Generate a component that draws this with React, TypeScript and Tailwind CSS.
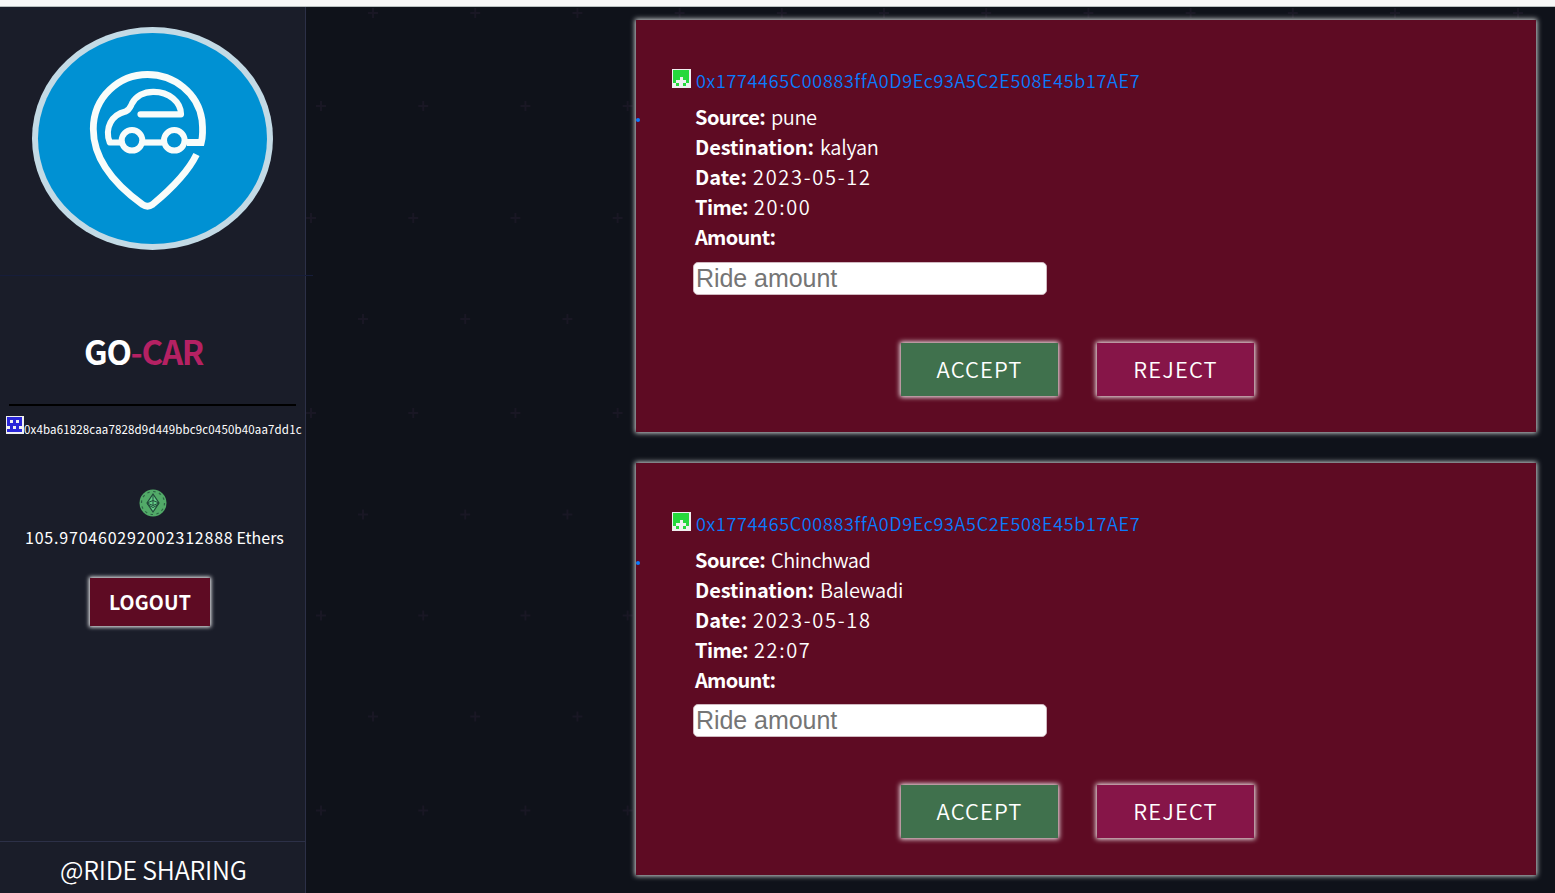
import React from "react";

const ADDRESS = "0x1774465C00883ffA0D9Ec93A5C2E508E45b17AE7";

const rides = [
  { source: "pune", destination: "kalyan", date: "2023-05-12", time: "20:00", inputGap: "mt-[10px]" },
  { source: "Chinchwad", destination: "Balewadi", date: "2023-05-18", time: "22:07", inputGap: "mt-[9px]" },
];

const plusRows: [number, number, number][] = [
  [13, 373, 11],
  [13, 1518, 1],
  [106, 321, 4],
  [218, 311, 4],
  [319, 363, 3],
  [413, 311, 4],
  [514.5, 363, 3],
  [615.5, 321, 4],
  [716.5, 373, 3],
  [810.5, 321, 4],
];

function Pattern() {
  return (
    <svg className="pointer-events-none absolute inset-0" width="1555" height="893" stroke="#191724" strokeWidth="2">
      {plusRows.flatMap(([y, x, n]) =>
        Array.from({ length: n }, (_, i) => {
          const cx = x + i * 102.2;
          return <path key={`${y}-${x}-${i}`} d={`M${cx - 5} ${y}h10M${cx} ${y - 5}v10`} />;
        }),
      )}
    </svg>
  );
}

function Logo() {
  return (
    <svg width="241" height="223" viewBox="32 27 241 223" fill="none">
      <ellipse cx="152.5" cy="138.5" rx="120.5" ry="111.5" fill="#c3dae5" />
      <ellipse cx="152.5" cy="138.5" rx="114.5" ry="105.5" fill="#0091d3" />
      <g stroke="#f8fcfa" strokeWidth="6.8">
        <path d="M187 142.500H201.300C203 136 203 130 202 120C198 93 174 74.500 147.500 74.500C119 74.500 93.300 97 93.300 129C93.300 163 121 189 142.500 204.500Q147.500 208 152.500 204.500C170 190 187 174 196.500 154.500" />
        <path d="M120 142.500H109.800C107 136 107.500 128 110.500 122.500C114 116 120 112.800 125.500 111.500C129.500 110 129.800 108 132 103.500C136 96 144 91.800 153 91.800C169 91.500 181 102 181 114.300H140.500" strokeWidth="6.200" strokeLinejoin="round" strokeLinecap="round" />
        <path d="M144 142.500H162" strokeWidth="6.200" />
        <circle cx="132" cy="140.300" r="10.300" strokeWidth="6" />
        <circle cx="174.300" cy="140.300" r="10.300" strokeWidth="6" />
      </g>
    </svg>
  );
}

function UserIdenticon() {
  return (
    <svg width="18" height="18" viewBox="0 0 18 18" shapeRendering="crispEdges" className="shrink-0">
      <rect width="18" height="18" fill="#f0f0f0" />
      <path fill="#2a26d8" d="M1 1h15v15h-15z" />
      <path fill="#f0f0f0" d="M4 4h3v3h-3zM10 4h3v3h-3zM1 10h3v3h-3zM7 10h3v3h-3zM13 10h3v3h-3z" />
    </svg>
  );
}

function RideIdenticon() {
  return (
    <svg width="19" height="19" viewBox="0 0 19 19" shapeRendering="crispEdges">
      <rect width="19" height="19" fill="#f0f0f0" />
      <path fill="#26d83c" d="M1 1h16v13h-16z" />
      <path fill="#f0f0f0" d="M8 8h3v3h3v3h-10v-3h4z" />
      <path fill="#26d83c" d="M4 14h3v3h-3zM11 14h3v3h-3z" />
    </svg>
  );
}

function EtherCoin() {
  return (
    <svg width="28" height="28" viewBox="0 0 28 28">
      <circle cx="14" cy="14" r="13.500" fill="#52aa68" />
      <circle cx="14" cy="14" r="11.500" fill="none" stroke="#2d6345" strokeWidth="1.200" strokeDasharray="2.500 3.500" />
      <path d="M14 5L20 14L14 23L8 14Z" fill="#63cd87" stroke="#224b3a" strokeWidth="1.200" />
      <path d="M8 14L14 11.500L20 14L14 16.500ZM14 5V16.500M8.500 15.500L14 18.500L19.500 15.500" fill="none" stroke="#224b3a" strokeWidth="1" />
    </svg>
  );
}

type FieldProps = { label: string; value?: string; labelClass: string; valueClass?: string };

function Field({ label, value, labelClass, valueClass = "" }: FieldProps) {
  return (
    <div className="flex h-[30px] items-center whitespace-pre pb-px text-[20px] leading-[29px] text-white">
      <strong className={`font-bold ${labelClass}`}>{label}</strong>
      <span className={`font-[350] ${valueClass}`}>{value}</span>
    </div>
  );
}

function RideCard({ ride }: { ride: (typeof rides)[number] }) {
  return (
    <article className="relative h-[412px] w-[900px] bg-[#5e0b23] pt-[48px] shadow-[0_0_5px_1px_#d6d9d9]">
      <span className="absolute left-0 top-[98px] size-1 rounded-full bg-[#087cff]" />
      <div className="flex h-[26px] items-start pl-[36px]">
        <div className="mt-px"><RideIdenticon /></div>
        <a className="ml-[5px] text-[18px] font-[350] leading-[25px] tracking-[0.66px] text-[#087cff]">{ADDRESS}</a>
      </div>
      <div className="pl-[59px] pt-[8px]">
        <Field label="Source:" value={ride.source} labelClass="w-[76px] tracking-[-0.6px]" valueClass="tracking-[-0.45px]" />
        <Field label="Destination:" value={ride.destination} labelClass="w-[125px] tracking-[-0.13px]" valueClass="tracking-[-0.3px]" />
        <Field label="Date:" value={ride.date} labelClass="w-[58px]" valueClass="tracking-[1.7px]" />
        <Field label="Time:" value={ride.time} labelClass="w-[59px] tracking-[-0.6px]" valueClass="tracking-[1.6px]" />
        <Field label="Amount:" labelClass="tracking-[-0.7px]" />
      </div>
      <input
        placeholder="Ride amount"
        className={`ml-[57px] block h-[33px] w-[354px] rounded-[5px] border border-[#d0b8c0] bg-white px-[2px] font-['Liberation_Sans',sans-serif] text-[25px] leading-[30px] tracking-[-0.05px] placeholder:text-[#757575] ${ride.inputGap}`}
      />
      <div className="ml-[265px] mt-[48px] flex gap-[39px]">
        <button className="h-[53px] w-[157px] bg-[#40714d] pb-[2px] text-[22px] font-[350] tracking-[1.100px] text-white shadow-[0_0_5px_1px_#ffffff]">ACCEPT</button>
        <button className="h-[53px] w-[157px] bg-[#861548] pb-[2px] text-[22px] font-[350] tracking-[1.100px] text-white shadow-[0_0_5px_1px_#ffffff]">REJECT</button>
      </div>
    </article>
  );
}

export default function App() {
  return (
    <div className="relative flex h-[893px] w-[1555px] flex-col overflow-hidden bg-[#0f121a] font-['Noto_Sans_CJK_JP','Noto_Sans',sans-serif]">
      <Pattern />
      <div className="relative h-[7px] shrink-0 border-b border-[#b8bfbf] bg-[#f7f7f7]" />
      <div className="relative flex min-h-0 flex-1">
        <aside className="flex w-[306px] shrink-0 flex-col border-r border-[#2c3047] bg-[#1a1d29]">
          <div className="h-[268px] pl-[32px] pt-[20px]"><Logo /></div>
          <div className="h-px w-[313px] bg-[#161d3a]" />
          <h1 className="ml-[84px] mt-[50px] whitespace-nowrap text-[33px] font-bold leading-[50px] tracking-[-1.25px] text-white">
            GO<span className="text-[#b52163]">-CAR</span>
          </h1>
          <div className="ml-[9px] mt-[28px] h-[2px] w-[287px] bg-black" />
          <div className="ml-[6px] mt-[10px] flex h-[24px] items-start whitespace-nowrap text-white">
            <UserIdenticon />
            <span className="mt-[4px] text-[11.500px] leading-[18px] tracking-[0.15px]">0x4ba61828caa7828d9d449bbc9c0450b40aa7dd1c</span>
          </div>
          <div className="ml-[139px] mt-[49px]"><EtherCoin /></div>
          <p className="ml-[25px] mt-[8px] whitespace-nowrap text-[16px] leading-[24px] text-white">
            <span className="tracking-[0.8px]">105.970460292002312888</span>
            <span className="ml-[3px]">Ethers</span>
          </p>
          <button className="ml-[90px] mt-[29px] h-[48px] w-[120px] bg-[#5e0b23] text-[19.500px] font-bold tracking-[0.15px] text-white shadow-[0_0_4px_1px_#ffffff]">LOGOUT</button>
          <footer className="mt-auto flex h-[52px] items-center whitespace-nowrap border-t border-[#2c3047] pl-[60px] pt-[5px] text-[25px] font-[350] tracking-[-0.2px] text-white">@RIDE SHARING</footer>
        </aside>
        <main className="flex flex-col gap-[31px] pl-[330px] pt-[13px]">
          {rides.map((ride) => (
            <RideCard key={ride.source} ride={ride} />
          ))}
        </main>
      </div>
    </div>
  );
}
